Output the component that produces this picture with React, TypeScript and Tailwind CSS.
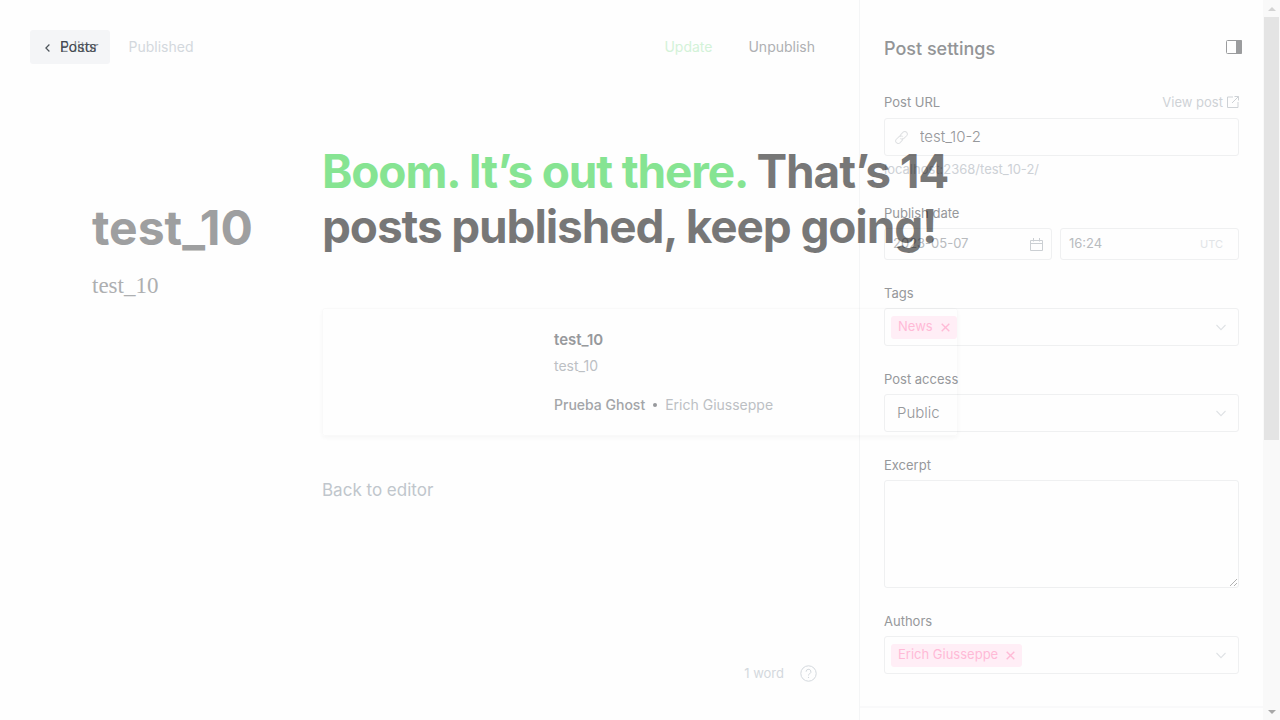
import type { ReactNode } from "react";

function Chevron({ className = "" }: { className?: string }) {
  return (
    <svg className={className} width="10" height="7" viewBox="0 0 10 7" fill="none" stroke="currentColor" strokeWidth="1.1">
      <path d="M0.5 1 5 5.7 9.500 1" />
    </svg>
  );
}

function Token({ name }: { name: string }) {
  return (
    <span className="flex h-[23px] items-center gap-2 rounded-[3px] bg-[#ffeef6] px-[7px] text-[13px] text-[#ffbad6]">
      {name}
      <button type="button" aria-label={`Remove ${name}`}>
        <svg width="9" height="9" viewBox="0 0 9 9" stroke="currentColor" strokeWidth="1.4">
          <path d="M0.700 0.700 8.300 8.300M8.300 0.700 0.700 8.300" />
        </svg>
      </button>
    </span>
  );
}

function TokenBox({ id, name }: { id: string; name: string }) {
  return (
    <div className="flex h-[38px] items-center rounded-[3px] border border-[#eff0f1] pr-3 pl-1.5">
      <Token name={name} />
      <input id={id} className="min-w-0 flex-1 bg-transparent px-1 text-[13px] outline-none" />
      <Chevron className="text-[#dfe2e5]" />
    </div>
  );
}

function Field({ label, id, children }: { label: string; id: string; children: ReactNode }) {
  return (
    <div className="flex flex-col gap-1.5">
      <label htmlFor={id} className="text-[13px] leading-[18px] text-[#96989b]">
        {label}
      </label>
      {children}
    </div>
  );
}

function Editor() {
  return (
    <main className="flex min-w-0 flex-1 flex-col">
      <header className="flex h-[94px] items-center justify-between pr-11 pl-[30px] text-sm">
        <div className="flex items-center gap-[18px]">
          <a href="#posts" className="relative flex h-[34px] items-center gap-2.5 rounded-[3px] bg-[#f4f5f7] pr-3.5 pl-[15px] text-[#394047]/90">
            <svg width="5" height="8" viewBox="0 0 5 8" fill="none" stroke="currentColor" strokeWidth="1.2" className="mt-0.5">
              <path d="M4.400 0.500 0.900 4 4.400 7.500" />
            </svg>
            Posts
            <span className="absolute left-[30px] text-[#394047]/60">Editor</span>
          </a>
          <span className="text-[#d3d8dd]">Published</span>
        </div>
        <div className="flex items-center gap-9">
          <button type="button" className="text-[#d3f2d8]">Update</button>
          <button type="button" className="text-[#aeb0b3]">Unpublish</button>
        </div>
      </header>
      <article className="flex flex-1 flex-col gap-3 px-[92px] pt-[104px]">
        <h1 className="text-5xl leading-[60px] font-bold text-[#9e9fa0]">test_10</h1>
        <p className="font-['Liberation_Serif',serif] text-[23px] leading-[32px] text-[#adafb1]">test_10</p>
      </article>
      <footer className="flex items-center justify-end gap-4 px-[42px] pb-[38px] text-[13px] leading-[18px] text-[#d3d8dd]">
        1 word
        <button type="button" aria-label="Help">
          <svg width="17" height="17" viewBox="0 0 17 17" fill="none" stroke="currentColor">
            <circle cx="8.500" cy="8.500" r="7.700" />
            <path d="M6.100 6.700a2.400 2.400 0 1 1 3.500 2.100c-.8.400-1.100.8-1.100 1.700" />
            <circle cx="8.500" cy="12.400" r=".6" fill="currentColor" stroke="none" />
          </svg>
        </button>
      </footer>
    </main>
  );
}

function Settings() {
  return (
    <aside className="w-[404px] border-l border-[#f4f5f6]">
      <div className="flex flex-col gap-6 border-b-2 border-[#f9f9fa] px-6 pt-[37px] pb-8">
        <div className="-mr-[3px] flex h-6 items-center justify-between">
          <h2 className="text-lg font-medium text-[#939597]">Post settings</h2>
          <button type="button" aria-label="Close settings" className="pb-1 text-[#9b9c9e]">
            <svg width="16" height="14" viewBox="0 0 16 14" fill="none" stroke="currentColor">
              <rect x=".5" y=".5" width="15" height="13" rx="1" />
              <path d="M10 0h5a1 1 0 0 1 1 1v12a1 1 0 0 1-1 1h-5z" fill="currentColor" stroke="none" />
            </svg>
          </button>
        </div>

        <div className="flex flex-col pt-2 pb-0.5">
          <div className="flex items-center justify-between text-[13px] leading-[18px]">
            <label htmlFor="url" className="text-[#96989b]">Post URL</label>
            <a href="#view" className="flex items-center gap-1 text-[#ced2d6]">
              View post
              <svg width="12" height="12" viewBox="0 0 12 12" fill="none" stroke="currentColor">
                <path d="M6 1H.5v10.500H11V6M7.500.5h4v4M11.500.5 5 7" />
              </svg>
            </a>
          </div>
          <div className="mt-[7px] flex h-[38px] items-center gap-3 rounded-[3px] border border-[#eff0f1] px-2.5">
            <svg width="13" height="13" viewBox="0 0 24 24" fill="none" stroke="#dfe1e3" strokeWidth="1.900">
              <path d="M10 13.500a4.500 4.500 0 0 0 6.500.3l5-5a4.600 4.600 0 0 0-6.500-6.500l-4 4a4.500 4.500 0 0 0-1 4.700M14 10.500a4.500 4.500 0 0 0-6.500-.3l-5 5A4.600 4.600 0 0 0 9 21.700l4-4a4.500 4.500 0 0 0 1-4.700" />
            </svg>
            <input id="url" defaultValue="test_10-2" className="min-w-0 flex-1 bg-transparent text-[15px] font-light text-[#96989b] outline-none" />
          </div>
          <p className="mt-1 text-[13px] leading-[18px] text-[#cdd1d6]">localhost:2368/test_10-2/</p>
        </div>

        <Field label="Publish date" id="date">
          <div className="flex gap-2">
            <div className="flex h-8 w-[168px] items-center rounded-[3px] border border-[#eff0f1] px-2">
              <input id="date" defaultValue="2023-05-07" className="min-w-0 flex-1 bg-transparent text-[13px] text-[#b8bbbe] outline-none" />
              <svg width="13" height="13" viewBox="0 0 13 13" fill="none" stroke="#cbcfd3">
                <path d="M.5 2.500h12v10H.5zM.5 5.500h12M3.500 0v3.500M9.500 0v3.500" />
              </svg>
            </div>
            <div className="flex h-8 min-w-0 flex-1 items-center rounded-[3px] border border-[#eff0f1] pr-[15px] pl-2">
              <input aria-label="Publish time" defaultValue="16:24" className="min-w-0 flex-1 bg-transparent text-[13px] text-[#b8bbbe] outline-none" />
              <span className="text-[11px] text-[#e1e4e7]">UTC</span>
            </div>
          </div>
        </Field>

        <Field label="Tags" id="tags">
          <TokenBox id="tags" name="News" />
        </Field>

        <Field label="Post access" id="access">
          <div className="grid items-center">
            <select id="access" className="col-start-1 row-start-1 h-[38px] appearance-none rounded-[3px] border border-[#eff0f1] bg-transparent px-3 text-[15px] font-light text-[#96989b]">
              <option>Public</option>
              <option>Members only</option>
            </select>
            <Chevron className="pointer-events-none col-start-1 row-start-1 mr-[13px] justify-self-end text-[#dfe2e5]" />
          </div>
        </Field>

        <Field label="Excerpt" id="excerpt">
          <textarea id="excerpt" className="h-[108px] resize-y rounded-[3px] border border-[#dfe1e3] bg-transparent opacity-50" />
        </Field>

        <Field label="Authors" id="authors">
          <TokenBox id="authors" name="Erich Giusseppe" />
        </Field>
      </div>
    </aside>
  );
}

function Scrollbar() {
  return (
    <div aria-hidden="true" className="flex w-[17px] flex-col items-center bg-[#f9f9f9]">
      <div className="flex h-[17px] items-center">
        <svg width="8" height="4" viewBox="0 0 8 4" fill="#d3d3d3"><path d="M4 0l4 4H0z" /></svg>
      </div>
      <div className="h-[423px] w-[15px] bg-[#e4e4e4]" />
      <div className="mt-auto flex h-[17px] items-center">
        <svg width="8" height="4" viewBox="0 0 8 4" fill="#a8a8a8"><path d="M0 0h8L4 4z" /></svg>
      </div>
    </div>
  );
}

function PublishedOverlay() {
  return (
    <section className="pointer-events-none absolute inset-0 flex justify-center pt-[144px]">
      <div className="flex w-[636px] flex-col items-start">
        <h2 className="text-[46px] leading-[55px] font-bold tracking-tight text-black/53">
          <span className="text-[#86e492]">Boom. It’s out there.</span> That’s 14 posts published, keep going!
        </h2>
        <div className="mt-[54px] flex h-[128px] w-full flex-col rounded-[3px] border border-black/2 pt-5 pl-[231px] shadow-[0_2px_4px_rgba(0,0,0,0.03)]">
          <h3 className="text-[15px] leading-[22px] font-semibold text-[#97999c]">test_10</h3>
          <p className="mt-1 text-sm leading-[22px] text-[#bcc0c4]">test_10</p>
          <p className="mt-[17px] flex items-center gap-2 text-sm leading-[22px] text-[#bcc0c4]">
            <span className="font-medium text-[#a3a5a8]">Prueba Ghost</span>
            <span className="size-1 rounded-full bg-[#97999c]" />
            Erich Giusseppe
          </p>
        </div>
        <button type="button" className="pointer-events-auto mt-[42px] text-[17px] leading-6 text-[#c0c6cc]">
          Back to editor
        </button>
      </div>
    </section>
  );
}

export default function App() {
  return (
    <div className="relative flex h-screen overflow-hidden bg-[#fefefe] font-[Inter,sans-serif]">
      <Editor />
      <Settings />
      <Scrollbar />
      <PublishedOverlay />
    </div>
  );
}
